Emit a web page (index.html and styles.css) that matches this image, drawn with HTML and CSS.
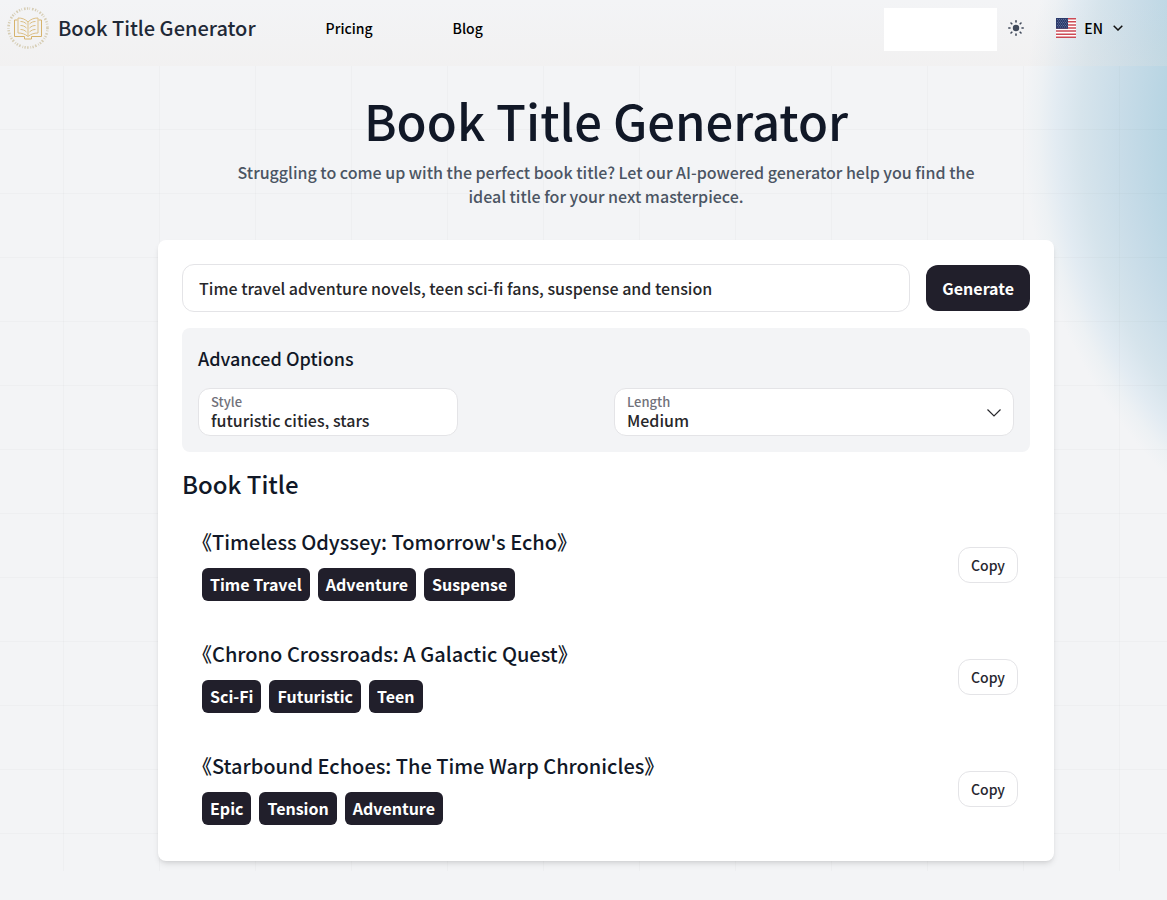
FILE: index.html
```html
<!DOCTYPE html>
<html lang="en">
<head>
<meta charset="utf-8">
<meta name="viewport" content="width=device-width, initial-scale=1">
<title>Book Title Generator</title>
<link rel="stylesheet" href="styles.css">
</head>
<body>
<div class="page">
  <header class="header">
    <a class="brand" href="#">
      <svg class="logo" viewBox="0 0 42 42" fill="none" stroke="#dcbf85" aria-hidden="true">
        <circle cx="21" cy="21" r="19.500" stroke="#d6cdb4" stroke-width="2.600" stroke-dasharray="1.300 1.300 .7 1.900 1.600 1.400"/>
        <path stroke="#d6b36c" d="M10.500 13h-3v16.500h10v2.500h7v-2.500h10V13h-3"/>
        <path d="M21 15c-3-3-6-4-10-4v15c4 0 7 1 10 3.500 3-2.500 6-3.500 10-3.500V11c-4 0-7 1-10 4v14"/>
        <path d="M13.500 14.500c2 0 4 .5 6 2.500M13.500 18.500c2 0 4 .5 6 2.500M13.500 22.500c2 0 4 .5 6 2.500M28.500 14.500c-2 0-4 .5-6 2.500M28.500 18.500c-2 0-4 .5-6 2.500M28.500 22.500c-2 0-4 .5-6 2.500"/>
      </svg>
      <span>Book Title Generator</span>
    </a>
    <nav class="nav">
      <a href="#">Pricing</a>
      <a href="#">Blog</a>
    </nav>
    <div class="tools">
      <div class="slot"></div>
      <button class="theme" type="button" aria-label="Toggle theme">
        <svg viewBox="0 0 16 16" fill="#414a5b" aria-hidden="true">
          <circle cx="8" cy="8" r="3.200"/>
          <path d="M8 .8v1.200M8 14v1.200M.8 8H2M14 8h1.200M3 3l.8.8M12.200 12.200l.8.8M13 3l-.8.8M3.800 12.200l-.8.8" stroke="#414a5b" stroke-width="1.600" stroke-linecap="round"/>
        </svg>
      </button>
      <button class="lang" type="button">
        <svg class="flag" viewBox="0 0 20 20" aria-hidden="true">
          <path fill="#fff" d="M0 0h20v20H0z"/>
          <path stroke="#cc4a55" stroke-width="1.540" d="M0 .77h20M0 3.850h20M0 6.920h20M0 10h20M0 13.080h20M0 16.150h20M0 19.230h20"/>
          <path fill="#2b3a6b" d="M0 0h12v10.770H0z"/>
          <path stroke="#8a96bb" stroke-width=".7" stroke-dasharray=".8 1.200" d="M1 1.500h10.500M2 3h9.500M1 4.500h10.500M2 6h9.500M1 7.500h10.500M2 9h9.500"/>
        </svg>
        <span>EN</span>
        <svg class="chev" viewBox="0 0 10 6" fill="none" stroke="#111" stroke-width="1.500" aria-hidden="true"><path d="m.7.7 4.300 4.300L9.300.7"/></svg>
      </button>
    </div>
  </header>
  <main class="main">
    <h1 class="title">Book Title Generator</h1>
    <p class="lead">Struggling to come up with the perfect book title? Let our AI-powered generator help you find the ideal title for your next masterpiece.</p>
    <section class="card">
      <form class="prompt">
        <input class="prompt-input" type="text" aria-label="Book description" value="Time travel adventure novels, teen sci-fi fans, suspense and tension">
        <button class="generate" type="button">Generate</button>
      </form>
      <div class="options">
        <h2 class="options-title">Advanced Options</h2>
        <div class="options-grid">
          <div class="field field-short">
            <label for="style">Style</label>
            <input id="style" type="text" value="futuristic cities, stars">
          </div>
          <div class="field">
            <label for="length">Length</label>
            <select id="length"><option>Short</option><option selected>Medium</option><option>Long</option></select>
            <svg class="field-arrow" viewBox="0 0 14 8" fill="none" stroke="#28282c" stroke-width="1.200" aria-hidden="true"><path d="m.5.5 6.500 6.500L13.500.5"/></svg>
          </div>
        </div>
      </div>
      <h2 class="results-title">Book Title</h2>
      <ul class="results">
        <li class="result">
          <div>
            <h3>《Timeless Odyssey: Tomorrow's Echo》</h3>
            <div class="tags"><span>Time Travel</span><span>Adventure</span><span>Suspense</span></div>
          </div>
          <button class="copy" type="button">Copy</button>
        </li>
        <li class="result">
          <div>
            <h3>《Chrono Crossroads: A Galactic Quest》</h3>
            <div class="tags"><span>Sci-Fi</span><span>Futuristic</span><span>Teen</span></div>
          </div>
          <button class="copy" type="button">Copy</button>
        </li>
        <li class="result">
          <div>
            <h3>《Starbound Echoes: The Time Warp Chronicles》</h3>
            <div class="tags"><span>Epic</span><span>Tension</span><span>Adventure</span></div>
          </div>
          <button class="copy" type="button">Copy</button>
        </li>
      </ul>
    </section>
  </main>
</div>
</body>
</html>
```
FILE: styles.css
```css
* { box-sizing: border-box; }
body, h1, h2, h3, p, ul { margin: 0; padding: 0; }
body {
  background: #f3f4f6;
  color: #111827;
  font-family: "Noto Sans CJK SC", "Noto Sans", sans-serif;
  font-size: 16px;
  font-weight: 500;
  line-height: 24px;
}
h1, h2, h3 { font-weight: 500; }
button, input, select { font: inherit; color: inherit; }
button { cursor: pointer; }
a { color: inherit; text-decoration: none; }
.page {
  min-height: 100vh;
  background: radial-gradient(circle at calc(100% + 346px) 130px, #a8cfe0 300px, #b8d5e3 350px, #c8dce8 393px, #d6e4ec 432px, #e2ebf2 456px, #edf1f4 474px, rgba(243, 244, 246, 0) 490px);
}
.header {
  display: flex;
  align-items: center;
  height: 66px;
  padding: 0 44px 10px 7px;
  background: linear-gradient(rgba(236, 228, 222, 0), rgba(236, 228, 222, .2));
}
.brand { display: flex; align-items: center; gap: 9px; color: #1f2937; font-size: 20px; }
.logo { width: 42px; height: 42px; }
.nav { display: flex; gap: 80px; margin-left: 70px; color: #000; font-size: 14px; }
.tools { display: flex; align-items: center; margin-left: auto; color: #000; font-size: 14px; }
.slot { width: 113px; height: 43px; margin-top: 2px; background: #fff; }
.theme { width: 16px; height: 16px; margin: 0 32px 0 11px; padding: 0; border: 0; background: none; }
.theme svg { display: block; }
.lang { display: flex; align-items: center; gap: 8px; padding: 0; border: 0; background: none; }
.flag { width: 20px; height: 20px; }
.chev { width: 10px; height: 6px; margin-left: 2px; }
.main {
  padding: 24px 24px 10px 69px;
  background-image:
    linear-gradient(90deg, rgba(0, 0, 0, .02) 1px, transparent 1px),
    linear-gradient(transparent 63px, rgba(0, 0, 0, .02) 63px);
  background-size: 96px 64px;
  background-position: 63px 0;
}
.title { margin-bottom: 10px; font-size: 49px; line-height: 60px; text-align: center; }
.lead { max-width: 768px; margin: 0 auto 32px; color: #4b5563; text-align: center; }
.card {
  max-width: 896px;
  margin: 0 auto;
  padding: 24px;
  border-radius: 8px;
  background: #fff;
  box-shadow: 0 4px 6px -1px rgba(0, 0, 0, .1), 0 2px 4px -2px rgba(0, 0, 0, .1);
}
.prompt { display: flex; align-items: center; gap: 16px; }
.prompt-input {
  flex: 1;
  height: 48px;
  padding: 0 16px;
  border: 1px solid #e4e4e7;
  border-radius: 12px;
  color: #27272a;
}
.generate {
  height: 46px;
  padding: 0 16px;
  border: 0;
  border-radius: 12px;
  background: #211f2b;
  color: #fff;
  font-weight: 700;
}
.options { margin-top: 16px; padding: 16px; border-radius: 8px; background: #f3f4f6; }
.options-title { margin-bottom: 16px; font-size: 18px; line-height: 28px; }
.options-grid { display: grid; grid-template-columns: 1fr 1fr; gap: 16px; }
.field {
  position: relative;
  display: flex;
  flex-direction: column;
  height: 48px;
  padding: 4px 12px;
  border: 1px solid #e4e4e7;
  border-radius: 12px;
  background: #fff;
  color: #27272a;
}
.field-short { width: 260px; }
.field label { color: #71717a; font-size: 13px; line-height: 18px; }
.field input, .field select {
  width: 100%;
  height: 18px;
  padding: 0;
  border: 0;
  background: none;
  line-height: 18px;
  appearance: none;
}
.field-arrow { position: absolute; top: 20px; right: 12px; width: 14px; height: 8px; pointer-events: none; }
.results-title { margin: 16px 0; font-size: 24px; line-height: 32px; }
.results { display: grid; gap: 15px; list-style: none; }
.result { display: flex; align-items: center; justify-content: space-between; padding: 12px 12px 12px 20px; }
.result h3 { margin-bottom: 13px; font-size: 20px; line-height: 27px; text-spacing-trim: trim-start; }
.tags { display: flex; gap: 8px; }
.tags span { padding: 4px 8px; border-radius: 6px; background: #211f2b; color: #fff; font-weight: 700; line-height: 25px; }
.copy {
  height: 36px;
  padding: 0 12px;
  border: 1px solid #e4e4e7;
  border-radius: 12px;
  background: #fff;
  color: #27272f;
  font-size: 14px;
}
```
